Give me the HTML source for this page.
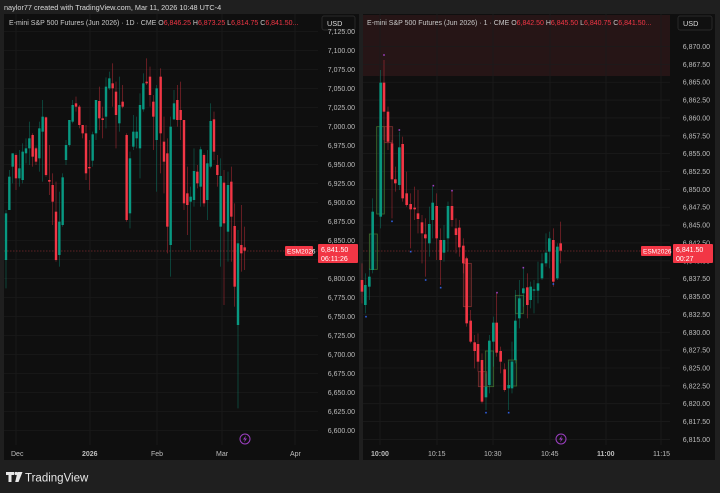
<!DOCTYPE html>
<html><head><meta charset="utf-8">
<style>
html,body{margin:0;padding:0;background:#1f1f1f;width:720px;height:493px;overflow:hidden;font-family:"Liberation Sans",sans-serif;}
svg{position:absolute;left:0;top:0}
text{font-family:"Liberation Sans",sans-serif}
</style></head><body>
<svg id="s" width="720" height="493" viewBox="0 0 720 493">
<rect x="0" y="0" width="720" height="493" fill="#1f1f1f"/>
<text x="4" y="10" font-size="7.3" fill="#d8d8d8">naylor77 created with TradingView.com, Mar 11, 2026 10:48 UTC-4</text>
<rect x="4" y="14" width="355" height="446" fill="#0f0f0f"/>
<rect x="363" y="14" width="352" height="446" fill="#0f0f0f"/>
<rect x="363" y="15" width="307" height="61" fill="#261516"/>
<g id="grid"></g>
<g id="c"></g>
<text x="9" y="25" font-size="7" fill="#c8c8c8">E-mini S&amp;P 500 Futures (Jun 2026) · 1D · CME  <tspan>O</tspan><tspan fill="#f23645">6,846.25</tspan>  H<tspan fill="#f23645">6,873.25</tspan>  L<tspan fill="#f23645">6,814.75</tspan>  C<tspan fill="#f23645">6,841.50...</tspan></text>
<text x="367" y="25" font-size="7" fill="#c8c8c8">E-mini S&amp;P 500 Futures (Jun 2026) · 1 · CME  O<tspan fill="#f23645">6,842.50</tspan>  H<tspan fill="#f23645">6,845.50</tspan>  L<tspan fill="#f23645">6,840.75</tspan>  C<tspan fill="#f23645">6,841.50...</tspan></text>
<rect x="322" y="16" width="33" height="14" rx="2" fill="#101010" stroke="#333" stroke-width="0.7"/>
<text x="327" y="26" font-size="7.3" fill="#ddd">USD</text>
<rect x="678" y="16" width="34" height="14" rx="2" fill="#101010" stroke="#333" stroke-width="0.7"/>
<text x="683" y="26" font-size="7.3" fill="#ddd">USD</text>
<g id="ax"></g>
<rect x="285" y="246" width="28" height="10" rx="1" fill="#f23645"/>
<text x="287" y="253.5" font-size="6.5" fill="#fff">ESM2026</text>
<rect x="318" y="244" width="40" height="19" rx="1" fill="#f23645"/>
<text x="321" y="252" font-size="7" fill="#fff">6,841.50</text>
<text x="321" y="261" font-size="7" fill="#fff">06:11:26</text>
<rect x="641" y="246" width="30" height="10" rx="1" fill="#f23645"/>
<text x="643" y="253.5" font-size="6.5" fill="#fff">ESM2026</text>
<rect x="673" y="244" width="40" height="19" rx="1" fill="#f23645"/>
<text x="676" y="252" font-size="7" fill="#fff">6,841.50</text>
<text x="676" y="261" font-size="7" fill="#fff">00:27</text>
<g fill="none" stroke="#9c3fc1" stroke-width="1"><circle cx="245" cy="439" r="5"/><circle cx="561" cy="439" r="5"/></g>
<g fill="#9c3fc1"><path d="M246 435.5 L243 439.5 L245 439.5 L244 442.5 L247 438.5 L245 438.5 Z"/><path d="M562 435.5 L559 439.5 L561 439.5 L560 442.5 L563 438.5 L561 438.5 Z"/></g>
<g font-size="7" fill="#bdbdbd">
<text x="11" y="456">Dec</text><text x="82" y="456" font-weight="bold">2026</text><text x="151" y="456">Feb</text><text x="216" y="456">Mar</text><text x="290" y="456">Apr</text>
<text x="371" y="456" font-weight="bold">10:00</text><text x="428" y="456">10:15</text><text x="484" y="456">10:30</text><text x="541" y="456">10:45</text><text x="597" y="456" font-weight="bold">11:00</text><text x="653" y="456">11:15</text>
</g>
<g fill="#e8e8e8"><path d="M6 472 h8 v3 h-2.5 v7 h-3 v-7 h-2.5z"/><circle cx="16" cy="473.5" r="1.6"/><path d="M17.5 472 h5 l-4 10 h-3.3z"/></g>
<text x="25" y="481.5" font-size="11.5" fill="#e8e8e8">TradingView</text>
</svg>
<script>
var NS="http://www.w3.org/2000/svg";
function el(p,t,a){var e=document.createElementNS(NS,t);for(var k in a)e.setAttribute(k,a[k]);p.appendChild(e);return e;}
var G="#089981",R="#f23645";
var grid=document.getElementById('grid'),c=document.getElementById('c'),ax=document.getElementById('ax');
// left grid & axis
var lp=["7,125.00","7,100.00","7,075.00","7,050.00","7,025.00","7,000.00","6,975.00","6,950.00","6,925.00","6,900.00","6,875.00","6,850.00","6,825.00","6,800.00","6,775.00","6,750.00","6,725.00","6,700.00","6,675.00","6,650.00","6,625.00","6,600.00"];
lp.forEach(function(t,i){var y=34+i*19;el(grid,'line',{x1:4,x2:318,y1:y-2.5,y2:y-2.5,stroke:"#1b1b1b","stroke-width":0.8});var tx=el(ax,'text',{x:355,y:y,"font-size":7,fill:"#bdbdbd","text-anchor":"end"});tx.textContent=t;});
var rp=[];for(var i=0;i<=22;i++){var v=6870-i*2.5;rp.push(v);}
rp.forEach(function(v,i){var y=49+i*17.86;el(grid,'line',{x1:363,x2:670,y1:y-2.5,y2:y-2.5,stroke:"#1b1b1b","stroke-width":0.8});var s=v.toFixed(2);s=s[0]+","+s.slice(1);var tx=el(ax,'text',{x:710,y:y,"font-size":7,fill:"#bdbdbd","text-anchor":"end"});tx.textContent=s;});
[16,90,157,222,295].forEach(function(x){el(grid,'line',{x1:x,x2:x,y1:14,y2:445,stroke:"#1b1b1b","stroke-width":0.8});});
[380,437,493,550,606,661].forEach(function(x){el(grid,'line',{x1:x,x2:x,y1:14,y2:445,stroke:"#1b1b1b","stroke-width":0.8});});
el(grid,'line',{x1:4,x2:318,y1:251,y2:251,stroke:"#7a2a2e","stroke-width":0.7,"stroke-dasharray":"1.5,1.5"});
el(grid,'line',{x1:363,x2:672,y1:251,y2:251,stroke:"#7a2a2e","stroke-width":0.7,"stroke-dasharray":"1.5,1.5"});
var L=[[18,520,660,510,745,G],[28,410,510,390,510,G],[38,340,380,340,430,G],[48,345,415,340,450,R],[58,385,415,330,440,G],[68,335,420,310,430,G],[78,325,340,295,370,G],[88,295,325,245,375,G],[98,285,350,280,380,R],[108,325,365,320,375,R],[118,265,355,245,395,G],[128,230,275,180,425,G],[138,232,405,230,410,R],[148,420,425,315,465,R],[158,435,485,400,555,R],[168,515,660,425,665,R],[178,545,645,455,680,G],[188,412,555,400,560,G],[198,315,360,300,375,G],[208,240,315,240,320,G],[218,195,245,180,250,G],[228,190,200,170,215,R],[238,200,255,195,265,R],[248,255,280,255,295,R],[258,280,400,255,420,R],[268,381,385,300,450,R],[278,283,362,275,380,G],[288,180,280,180,300,G],[298,183,235,140,270,R],[308,235,240,200,295,R],[318,140,230,112,265,G],[328,115,145,95,150,G],[338,130,145,70,200,R],[348,155,225,125,325,R],[358,195,250,110,275,G],[368,185,200,135,205,R],[380,285,540,280,545,R],[390,355,520,335,565,G],[400,275,320,225,330,G],[410,275,295,230,325,G],[420,195,325,160,415,G],[430,130,208,100,215,G],[440,125,130,55,135,R],[450,110,165,80,200,R],[460,185,230,165,330,R],[470,145,300,135,455,G],[482,110,280,85,400,R],[492,305,365,230,460,R],[502,340,560,295,640,R],[512,260,615,230,710,G],[522,190,238,150,240,G],[532,180,240,135,260,R],[542,210,240,125,300,R],[552,240,490,240,510,R],[562,460,495,380,585,R],[572,470,485,440,630,G],[582,393,480,325,500,G],[592,395,430,375,445,R],[602,328,440,320,500,G],[612,345,490,340,500,R],[622,370,480,330,540,G],[632,243,380,190,385,G],[642,238,335,215,360,R],[652,375,405,345,440,R],[662,408,560,355,680,G],[672,428,550,390,795,R],[684,435,575,395,665,G],[694,425,530,380,665,R],[704,558,740,490,800,R],[714,610,855,570,1105,G],[724,615,640,495,695,R],[734,622,632,560,690,R]];
function draw(arr,ox,oy,w){arr.forEach(function(d){var x=ox+d[0]/3,t=oy+d[1]/3,b=oy+d[2]/3,wt=oy+d[3]/3,wb=oy+d[4]/3;
el(c,'line',{x1:x,x2:x,y1:wt,y2:wb,stroke:d[5],"stroke-width":0.7,opacity:0.55});
el(c,'rect',{x:x-w/2,y:t,width:w,height:Math.max(b-t,0.8),fill:d[5]});});}
draw(L,0,40,2.4);
var Rr=[[6,660,695,610,730,R],[16,675,735,640,760,G],[28,650,680,625,720,G],[38,455,630,415,640,G],[62,68,470,30,505,G],[72,68,155,0,240,R],[84,155,245,140,270,R],[96,250,358,240,475,R],[106,358,370,320,395,R],[118,262,375,215,390,G],[128,252,415,230,425,R],[140,400,435,335,440,R],[152,432,448,400,565,R],[164,443,448,380,480,R],[174,460,477,390,520,R],[186,487,520,465,610,R],[196,523,535,475,650,R],[208,492,550,440,590,G],[218,428,480,380,535,G],[230,438,535,400,600,R],[242,540,600,505,675,R],[252,540,578,495,605,G],[264,438,535,425,575,G],[276,438,480,390,500,R],[288,505,525,475,580,R],[298,503,562,480,590,R],[310,557,610,535,640,R],[320,595,790,590,800,R],[332,782,845,750,850,R],[344,847,873,825,925,R],[354,852,905,820,935,R],[366,900,1025,880,1030,R],[378,980,1012,940,1050,G],[388,842,975,825,1000,G],[400,788,845,770,920,G],[410,788,878,700,890,R],[422,873,905,860,940,R],[434,928,990,910,995,R],[446,975,985,905,1050,G],[456,905,985,845,1000,G],[466,782,900,690,910,G],[478,715,775,660,805,G],[490,685,700,625,740,G],[502,682,735,640,775,R],[512,680,720,665,745,G],[522,688,692,660,760,G],[534,670,692,605,730,G],[546,610,655,580,660,G],[558,578,610,520,620,G],[568,535,575,515,625,G],[580,540,665,505,680,R],[592,560,655,550,660,G],[602,550,572,485,610,R]];
// boxes
[[50,200,73,462,G],[73,200,98,248,R],[28,522,52,628,G],[310,610,334,740,R],[355,935,380,980,R],[376,873,401,980,G],[445,900,470,978,G],[466,706,491,760,G]].forEach(function(b){
el(c,'rect',{x:360+b[0]/3,y:60+b[1]/3,width:(b[2]-b[0])/3,height:(b[3]-b[1])/3,fill:b[4],"fill-opacity":0.12,stroke:b[4]==G?"#3f6a2a":"#7a3030","stroke-width":0.8});});
draw(Rr,360,60,2.6);
[[18,770],[96,484],[152,575],[197,660],[242,683],[378,1058],[446,1058],[580,672]].forEach(function(p){el(c,'rect',{x:360+p[0]/3-0.8,y:60+p[1]/3-0.8,width:1.6,height:1.6,fill:"#2f5fe0"});});
[[118,210],[220,377],[276,392],[490,623],[411,698],[72,-15]].forEach(function(p){el(c,'rect',{x:360+p[0]/3-0.8,y:60+p[1]/3-0.8,width:1.6,height:1.6,fill:"#9c3fc1"});});
</script>
</body></html>
